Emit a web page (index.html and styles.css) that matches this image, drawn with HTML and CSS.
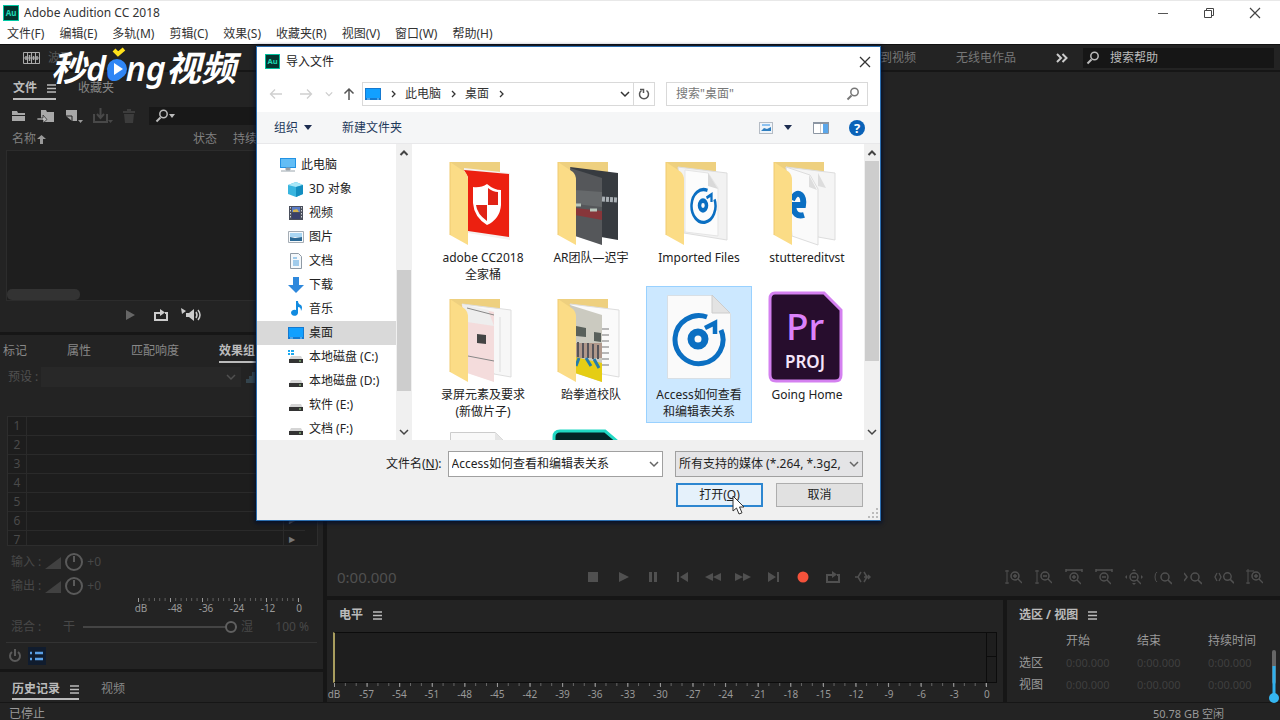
FILE: index.html
```html
<!DOCTYPE html>
<html lang="zh-CN">
<head>
  <meta charset="UTF-8" />
  <title>Adobe Audition CC 2018</title>
  <link rel="stylesheet" href="styles.css">
</head>
<body>
  <!-- Shared symbols -->
  <svg class="defs" width="0" height="0" aria-hidden="true">
    <symbol id="menu" viewBox="0 0 9 9"><path d="M0 1h9M0 4.5h9M0 8h9" stroke="currentColor" stroke-width="1.3"/></symbol>
    <symbol id="chev" viewBox="0 0 10 10"><path d="M1 3l4 4 4-4" fill="none" stroke="currentColor" stroke-width="1.5"/></symbol>
    <symbol id="chev-up" viewBox="0 0 10 10"><path d="M1.500 7L5 3.500 8.500 7" fill="none" stroke="currentColor" stroke-width="2"/></symbol>
    <symbol id="chev-right" viewBox="0 0 10 10"><path d="M4 2l3 3-3 3" fill="none" stroke="currentColor" stroke-width="1.300"/></symbol>
    <symbol id="au" viewBox="0 0 16 16">
      <rect width="16" height="16" fill="#00c8a4"/><rect x="1" y="1" width="14" height="14" fill="#04352f"/>
      <text x="8" y="11" text-anchor="middle" font-size="8" font-weight="700" fill="#20d8b4">Au</text>
    </symbol>
    <symbol id="desk" viewBox="0 0 16 16"><rect x="0" y="2" width="16" height="12" fill="#1579cf"/><rect x="1" y="3" width="14" height="9" fill="#12a0ff"/><path d="M2 13h3M12 13h2" stroke="#8fd0ff"/></symbol>
    <symbol id="drive" viewBox="0 0 16 16"><path d="M3 7h10l2 4H1z" fill="#d5d5d5"/><rect x="1" y="10" width="14" height="4" fill="#333"/><path d="M11 12h2" stroke="#9fe08f"/></symbol>
    <symbol id="lens" viewBox="0 0 14 14"><path d="M5.500 8.500L1.500 12.500" stroke="currentColor" stroke-width="2"/><circle cx="8.500" cy="5" r="3.700" fill="none" stroke="currentColor" stroke-width="1.500"/></symbol>
    <symbol id="loop" viewBox="0 0 16 14"><path d="M4 5H2v7h12V5h-2M3 5h6" fill="none" stroke="currentColor" stroke-width="2"/><path d="M7 1l5 3.500L7 8z" fill="currentColor"/></symbol>
    <symbol id="folder-back" viewBox="0 0 96 92"><path d="M15 8h50v66H15z" fill="#eed07f"/></symbol>
    <symbol id="folder-front" viewBox="0 0 96 92"><path d="M15 8l15 10q3 3 3 8v65L15 81z" fill="#fbdc86"/><path d="M15 8v73" stroke="#f0ca70"/></symbol>
    <symbol id="disc" viewBox="0 0 60 60" preserveAspectRatio="none"><path d="M39 8A24 24 0 1 0 53 21" fill="none" stroke="#0b6fc2" stroke-width="5"/><path d="M37 19l10-5v11" fill="none" stroke="#0b6fc2" stroke-width="4.500"/><circle cx="30" cy="30" r="7" fill="none" stroke="#0b6fc2" stroke-width="7"/></symbol>
    <symbol id="zoom-in" viewBox="0 0 16 16"><circle cx="9" cy="7" r="4" fill="none" stroke="currentColor" stroke-width="1.500"/><path d="M12 10l4 4M7 7h4M9 5v4" stroke="currentColor" stroke-width="1.400"/></symbol>
    <symbol id="zoom-out" viewBox="0 0 16 16"><circle cx="9" cy="7" r="4" fill="none" stroke="currentColor" stroke-width="1.500"/><path d="M12 10l4 4M7 7h4" stroke="currentColor" stroke-width="1.400"/></symbol>
    <symbol id="zoom" viewBox="0 0 16 16"><circle cx="9" cy="7" r="4" fill="none" stroke="currentColor" stroke-width="1.500"/><path d="M12 10l4 4" stroke="currentColor" stroke-width="1.600"/></symbol>
  </svg>

  <header class="titlebar">
    <svg width="16" height="16"><use href="#au"/></svg>
    <span class="app-name">Adobe Audition CC 2018</span>
    <div class="window-buttons">
      <button aria-label="最小化"><svg width="12" height="12"><path d="M1 6.500h10" stroke="#555"/></svg></button>
      <button aria-label="还原"><svg width="12" height="12" fill="none" stroke="#444"><path d="M1.500 3.500h7v7h-7zM3.500 3.500v-2h7v7h-2"/></svg></button>
      <button aria-label="关闭"><svg width="12" height="12"><path d="M1 1l10 10M11 1L1 11" stroke="#444" stroke-width="1.200"/></svg></button>
    </div>
  </header>

  <nav class="menubar">
    <button>文件(F)</button><button>编辑(E)</button><button>多轨(M)</button><button>剪辑(C)</button><button>效果(S)</button><button>收藏夹(R)</button><button>视图(V)</button><button>窗口(W)</button><button>帮助(H)</button>
  </nav>

  <div class="workspace-bar">
    <button class="mode"><svg width="17" height="12" fill="none" stroke="#aaa"><path d="M.5 .5h16v11H.5zM4.500 1v10M8.500 1v10M12.500 1v10M1 6h15" /><path d="M3 4v4M6.500 3v6M10.500 4v4M14 4v4" stroke-width="1.500"/></svg>波形</button>
    <div class="workspaces">
      <a href="#">编辑音频到视频</a>
      <a href="#">无线电作品</a>
      <button class="more" aria-label="更多"><svg width="12" height="10" fill="none" stroke="#ccc" stroke-width="2"><path d="M1 1l4 4-4 4M6.500 1l4 4-4 4"/></svg></button>
    </div>
    <label class="help-search"><svg width="14" height="14"><use href="#lens"/></svg><input type="text" placeholder="搜索帮助" aria-label="搜索帮助"></label>
  </div>

  <main class="workspace">
    <div class="side">
      <!-- Files -->
      <section class="panel files-panel">
        <div class="tabs">
          <button class="tab active">文件<svg width="9" height="9"><use href="#menu"/></svg></button>
          <button class="tab">收藏夹</button>
        </div>
        <div class="file-tools">
          <button aria-label="打开"><svg width="16" height="14"><path d="M1 2h5l1 2h7v8H1z" fill="#a8a8a8"/><path d="M1 6.500h14" stroke="#232323"/></svg></button>
          <button aria-label="导入"><svg width="18" height="14"><path d="M4 1h5l1 2h7v10H6V9H4z" fill="#a8a8a8"/><path d="M0 9h6V6l4 4.500-4 3.500v-3H0z" fill="#bbb" stroke="#232323" stroke-width=".7"/></svg></button>
          <button aria-label="新建"><svg width="18" height="14"><path d="M1 1h11v11H7L1 7z" fill="#a8a8a8"/><path d="M1 7h6v5" stroke="#232323" fill="none"/><path d="M13 11h5l-2.500 3z" fill="#999"/></svg></button>
          <button aria-label="插入"><svg width="20" height="16" fill="none" stroke="#484848" stroke-width="2"><path d="M1 6v8h13V6M7.500 0v9M4 6l3.500 4L11 6"/><path d="M15 12h5l-2.500 3z" fill="#484848" stroke="none"/></svg></button>
          <button aria-label="删除"><svg width="12" height="14"><path d="M0 2h4V0h4v2h4v2H0zM1 5h10l-1 9H2z" fill="#3c3c3c"/></svg></button>
          <label class="find"><svg width="14" height="14"><use href="#lens"/></svg><svg width="6" height="4"><path d="M0 0h6L3 4z" fill="#bbb"/></svg><input type="text" aria-label="查找文件"></label>
        </div>
        <div class="list-head"><span>名称<svg width="9" height="9"><path d="M4.500 0L9 4H6v5H3V4H0z" fill="#999"/></svg></span><span>状态</span><span>持续时间</span></div>
        <div class="list-box"><div class="hthumb"></div></div>
        <div class="preview">
          <button aria-label="播放"><svg width="10" height="12"><path d="M1 1l9 5-9 5z" fill="#666"/></svg></button>
          <button aria-label="循环"><svg width="16" height="14"><use href="#loop"/></svg></button>
          <button aria-label="自动播放"><svg width="22" height="14"><path d="M0 0l5 3-4 3z" fill="#ccc"/><path d="M5 5h3l5-4v12l-5-4H5z" fill="#ccc"/><path d="M15 4q2 3 0 6M17 2q4 5 0 10" fill="none" stroke="#ccc" stroke-width="1.500"/></svg></button>
        </div>
      </section>

      <!-- Effects rack -->
      <section class="panel effects-panel">
        <div class="tabs">
          <button class="tab">标记</button><button class="tab">属性</button><button class="tab">匹配响度</button><button class="tab active">效果组<svg width="9" height="9"><use href="#menu"/></svg></button>
        </div>
        <div class="preset">
          <label for="preset">预设 :</label>
          <span class="preset-box"><select id="preset"><option></option></select><svg width="10" height="10"><use href="#chev"/></svg></span>
          <svg width="12" height="12"><path d="M0 12V8h3V5h3V1h3v11z" fill="#34444d"/></svg>
        </div>
        <ol class="rack">
          <li><b>1</b><i></i></li><li><b>2</b><i></i></li><li><b>3</b><i></i></li><li><b>4</b><i></i></li><li><b>5</b><i></i></li><li><b>6</b><i>▶</i></li><li><b>7</b><i>▶</i></li>
        </ol>
        <div class="gain"><span>输入 :</span><svg width="16" height="14"><path d="M0 14L16 2v12z" fill="#414141"/></svg><svg width="18" height="18" fill="none" stroke="#5a5a5a" stroke-width="2"><circle cx="9" cy="9" r="8"/><path d="M9 3v6"/></svg><span>+0</span></div>
        <div class="gain"><span>输出 :</span><svg width="16" height="14"><path d="M0 14L16 2v12z" fill="#414141"/></svg><svg width="18" height="18" fill="none" stroke="#5a5a5a" stroke-width="2"><circle cx="9" cy="9" r="8"/><path d="M9 3v6"/></svg><span>+0</span></div>
        <div class="meter-scale">
          <div class="ticks"></div>
          <div class="scale"><span>dB</span><span>-48</span><span>-36</span><span>-24</span><span>-12</span><span>0</span></div>
        </div>
        <div class="mix"><label for="mix">混合 :</label><span>干</span><input id="mix" type="range" value="100"><span>湿</span><span class="percent">100 %</span></div>
        <div class="rack-foot">
          <button aria-label="电源"><svg width="14" height="14" fill="none" stroke="#5a5a5a" stroke-width="2"><path d="M4 3a5 5 0 1 0 6 0M7 0v7"/></svg></button>
          <button class="on" aria-label="列表"><svg width="14" height="10"><path d="M0 2h2M0 8h2M5 2h8M5 8h8" stroke="#5aa0e6" stroke-width="2.500"/></svg></button>
        </div>
      </section>

      <section class="panel history-panel">
        <div class="tabs">
          <button class="tab active">历史记录<svg width="9" height="9"><use href="#menu"/></svg></button>
          <button class="tab">视频</button>
        </div>
      </section>
    </div>

    <div class="center">
      <section class="panel editor">
        <div class="transport">
          <span class="time">0:00.000</span>
          <div class="transport-buttons">
            <button aria-label="停止"><svg width="16" height="14"><path d="M3 2h10v10H3z"/></svg></button>
            <button aria-label="播放"><svg width="16" height="14"><path d="M4 2l10 5-10 5z"/></svg></button>
            <button aria-label="暂停"><svg width="16" height="14"><path d="M4 2h3v10H4zM9 2h3v10H9z"/></svg></button>
            <button aria-label="上一个"><svg width="16" height="14"><path d="M2 2h2v10H2zM13 2v10L5 7z"/></svg></button>
            <button aria-label="快退"><svg width="16" height="14"><path d="M8 3v8L0 7zM16 3v8L8 7z"/></svg></button>
            <button aria-label="快进"><svg width="16" height="14"><path d="M0 3v8l8-4zM8 3v8l8-4z"/></svg></button>
            <button aria-label="下一个"><svg width="16" height="14"><path d="M3 2v10l8-5zM12 2h2v10h-2z"/></svg></button>
            <button aria-label="录制"><svg width="16" height="14"><circle cx="8" cy="7" r="5.500" fill="#f4523b"/></svg></button>
            <button aria-label="循环播放"><svg width="16" height="14"><use href="#loop"/></svg></button>
            <button aria-label="跳过所选"><svg width="16" height="14"><path d="M0 7h4M6 2L3 7l3 5M9 2l3 5-3 5M9 7h6M13 5l2 2-2 2" fill="none" stroke="#505050" stroke-width="1.500"/></svg></button>
          </div>
          <div class="zoom-buttons">
            <button aria-label="放大振幅"><svg width="18" height="16"><use href="#zoom-in" x="1" width="16" height="16"/><path d="M2 1v14M0 2h4M0 14h4" stroke="currentColor"/></svg></button>
            <button aria-label="缩小振幅"><svg width="18" height="16"><use href="#zoom-out" x="1" width="16" height="16"/><path d="M2 1v14M0 2h4M0 14h4" stroke="currentColor"/></svg></button>
            <button aria-label="放大时间"><svg width="18" height="16"><use href="#zoom-in" y="1" width="16" height="16"/><path d="M1 1h16M1 0v3M17 0v3" stroke="currentColor" stroke-width="1.500"/></svg></button>
            <button aria-label="缩小时间"><svg width="18" height="16"><use href="#zoom-out" y="1" width="16" height="16"/><path d="M1 1h16M1 0v3M17 0v3" stroke="currentColor" stroke-width="1.500"/></svg></button>
            <button aria-label="全部缩小"><svg width="18" height="16"><use href="#zoom-out" y="1" width="16" height="16"/><path d="M7 2l2-2 2 2zM7 14l2 2 2-2zM2 6L0 8l2 2zM16 6l2 2-2 2z" fill="currentColor"/></svg></button>
            <button aria-label="入点放大"><svg width="18" height="16"><use href="#zoom" x="2" y="1" width="16" height="16"/><path d="M3 3Q1 4 1 8t2 5" fill="none" stroke="currentColor"/></svg></button>
            <button aria-label="出点放大"><svg width="18" height="16"><use href="#zoom" x="2" y="1" width="16" height="16"/><path d="M0 4l3 4-3 4" fill="none" stroke="currentColor" stroke-width="1.500"/></svg></button>
            <button aria-label="缩放至选区"><svg width="20" height="16"><use href="#zoom" x="5" y="1" width="15" height="15"/><path d="M3 4L1 8l2 4M5 4l2 4-2 4" fill="none" stroke="currentColor" stroke-width="1.300"/></svg></button>
            <button aria-label="缩放轨道"><svg width="18" height="16"><use href="#zoom-in" x="1" width="16" height="16"/><path d="M2 0v15M0 2h4M0 14h4M4 2h4" stroke="currentColor"/></svg></button>
          </div>
        </div>
      </section>
      <div class="bottom">
        <section class="panel levels">
          <h2>电平<svg width="9" height="9"><use href="#menu"/></svg></h2>
          <div class="level-box"><div class="peaks"><i></i><i></i></div></div>
          <div class="level-scale">
            <div class="ticks"></div>
            <div class="scale"><span>dB</span><span>-57</span><span>-54</span><span>-51</span><span>-48</span><span>-45</span><span>-42</span><span>-39</span><span>-36</span><span>-33</span><span>-30</span><span>-27</span><span>-24</span><span>-21</span><span>-18</span><span>-15</span><span>-12</span><span>-9</span><span>-6</span><span>-3</span><span>0</span></div>
          </div>
        </section>
        <section class="panel selection">
          <h2>选区 / 视图<svg width="9" height="9"><use href="#menu"/></svg></h2>
          <table>
            <tr><th></th><th>开始</th><th>结束</th><th>持续时间</th></tr>
            <tr><th>选区</th><td>0:00.000</td><td>0:00.000</td><td>0:00.000</td></tr>
            <tr><th>视图</th><td>0:00.000</td><td>0:00.000</td><td>0:00.000</td></tr>
          </table>
        </section>
      </div>
    </div>
  </main>

  <footer class="statusbar"><span>已停止</span><span class="disk">50.78 GB 空闲</span></footer>

  <svg class="gauge" width="12" height="56"><path d="M6 4v30" stroke="#666" stroke-width="4" stroke-linecap="round"/><path d="M6 18v32" stroke="#2fb0ec" stroke-width="3"/><circle cx="6" cy="50" r="5" fill="#35b6f0"/></svg>

  <div class="brand">
    <span>秒</span><span class="latin">d</span><span class="latin o">o<svg width="22" height="34" viewBox="0 0 22 34"><path d="M8 3l4 4 6-5" fill="none" stroke="#ffe11a" stroke-width="4"/><circle cx="11" cy="22" r="10" fill="#2f86f5"/><path d="M8 16l9 6-9 6z" fill="#fff"/></svg></span><span class="latin">ng</span><span>视频</span>
  </div>

  <!-- Import dialog -->
  <div class="dialog" role="dialog" aria-label="导入文件">
    <div class="dialog-title">
      <svg width="15" height="15" viewBox="0 0 16 16"><use href="#au"/></svg><span>导入文件</span>
      <button aria-label="关闭"><svg width="12" height="12"><path d="M1 1l10 10M11 1L1 11" stroke="#333" stroke-width="1.300"/></svg></button>
    </div>

    <div class="dialog-nav">
      <button aria-label="后退"><svg width="14" height="12" fill="none" stroke="#cfcfcf" stroke-width="1.300"><path d="M13 6H2M6 1.500L1.500 6 6 10.500"/></svg></button>
      <button aria-label="前进"><svg width="14" height="12" fill="none" stroke="#cfcfcf" stroke-width="1.300"><path d="M1 6h11M8 1.500l4.500 4.500L8 10.500"/></svg></button>
      <button class="recent" aria-label="最近位置"><svg width="8" height="8"><use href="#chev"/></svg></button>
      <button class="up" aria-label="向上"><svg width="12" height="14" fill="none" stroke="#555" stroke-width="1.500"><path d="M6 13V2M1.500 6.500L6 2l4.500 4.500"/></svg></button>
      <div class="address">
        <svg width="16" height="16"><use href="#desk"/></svg>
        <svg width="10" height="10"><use href="#chev-right"/></svg>
        <span>此电脑</span>
        <svg width="10" height="10"><use href="#chev-right"/></svg>
        <span>桌面</span>
        <svg width="10" height="10"><use href="#chev-right"/></svg>
        <svg class="drop" width="10" height="10"><use href="#chev"/></svg>
        <button aria-label="刷新"><svg width="12" height="12" fill="none" stroke="#555" stroke-width="1.500"><path d="M8.500 2.500a4.500 4.500 0 1 1-5 0"/><path d="M2 1.500h3.500V5"/></svg></button>
      </div>
      <label class="search"><input type="text" placeholder="搜索&quot;桌面&quot;" aria-label="搜索桌面"><svg width="14" height="14"><use href="#lens"/></svg></label>
    </div>

    <div class="dialog-tools">
      <button>组织<svg width="8" height="5"><path d="M0 0h8L4 5z" fill="#1c2c50"/></svg></button>
      <button>新建文件夹</button>
      <div class="views">
        <button aria-label="视图"><svg width="14" height="12"><rect x=".5" y=".5" width="13" height="11" fill="#eef4fa" stroke="#b5bcc5"/><path d="M2 9l3-3 3 1 4-2v4z" fill="#2f7fc0"/><path d="M3 3h8" stroke="#6bb1ec" stroke-width="1.500"/></svg></button>
        <button aria-label="更多选项"><svg width="8" height="5"><path d="M0 0h8L4 5z" fill="#1c2c50"/></svg></button>
        <button aria-label="预览窗格"><svg width="16" height="12"><path d="M.5 .5h15v11H.5z" fill="#fff" stroke="#8c96a3"/><path d="M0 1h16" stroke="#8c96a3" stroke-width="2"/><path d="M10 2h5v9h-5z" fill="#5ba7ea"/><path d="M7.500 2v9" stroke="#ccc"/></svg></button>
        <button aria-label="帮助"><svg width="16" height="16"><circle cx="8" cy="8" r="8" fill="#0a62b8"/><text x="8" y="12.500" text-anchor="middle" font-size="13" font-weight="700" fill="#fff">?</text></svg></button>
      </div>
    </div>

    <div class="dialog-body">
      <ul class="tree">
        <li class="root"><svg width="16" height="16"><path d="M0 1h16v10H0z" fill="#2292e3"/><path d="M1 2h14v8H1z" fill="#62bdf5"/><path d="M6 11h4v2H6zM1 14h14" fill="#999" stroke="#9aa5ad"/></svg>此电脑</li>
        <li><svg width="16" height="16"><path d="M0 4l8-3 7 3v9l-7 3-8-3z" fill="#38b5df"/><path d="M0 4l8 2 7-2-7-3z" fill="#a8e7f7"/><path d="M8 6l7-2v9l-7 3z" fill="#138ec0"/></svg>3D 对象</li>
        <li><svg width="16" height="16"><path d="M1 1h14v14H1z" fill="#4a4f5c"/><path d="M4 2h8v5H4z" fill="#5a7cc8"/><path d="M4 8h8v6H4z" fill="#38406a"/><path d="M5 5l4-1 2 3H5z" fill="#d2b24f"/><path d="M2.500 2v12M13.500 2v12" stroke="#cdd0d6" stroke-dasharray="1.500"/></svg>视频</li>
        <li><svg width="16" height="16"><path d="M.5 2.500h15v11H.5z" fill="#f7fafc" stroke="#a5adb5"/><path d="M2 4h12v4H2z" fill="#a9d6f3"/><path d="M2 12V8l5 1 7-1v4z" fill="#2b6995"/></svg>图片</li>
        <li><svg width="16" height="16"><path d="M2.500 .5h8l3 3v12h-11z" fill="#f4f8fb" stroke="#8f9aa5"/><path d="M5 5h4M5 8h6M5 10h6M5 12h6" stroke="#4d9fdc"/></svg>文档</li>
        <li><svg width="16" height="16"><path d="M5 0h6v8h5l-8 8-8-8h5z" fill="#2e88dc"/></svg>下载</li>
        <li><svg width="16" height="16"><path d="M8 0h2q0 3 3 4 2 2 0 6 0-4-3-4v6a3.500 3 0 1 1-2-3z" fill="#128be0"/></svg>音乐</li>
        <li class="selected"><svg width="16" height="16"><use href="#desk"/></svg>桌面</li>
        <li><svg width="16" height="16"><use href="#drive"/><path d="M0 1h2v2H0zM3 1h3v2H3zM0 4h2v2H0zM3 4h3v2H3z" fill="#1eaaf0"/></svg>本地磁盘 (C:)</li>
        <li><svg width="16" height="16"><use href="#drive"/></svg>本地磁盘 (D:)</li>
        <li><svg width="16" height="16"><use href="#drive"/></svg>软件 (E:)</li>
        <li><svg width="16" height="16"><use href="#drive"/></svg>文档 (F:)</li>
      </ul>
      <div class="scroll tree-scroll"><svg width="10" height="10"><use href="#chev-up"/></svg><div class="thumb"></div><svg width="10" height="10"><use href="#chev"/></svg></div>

      <div class="files">
        <div class="file">
          <svg width="96" height="92"><use href="#folder-back"/><path d="M29 14l46 5v67l-42-7z" fill="#f5f0ee"/><path d="M29 16l45 4v63l-41-6V23z" fill="#ec2010"/><path d="M52 30q7 6 14 6v15q-1 14-14 20-13-8-14-22V33q8 1 14-3z" fill="#fff"/><path d="M52 35v16H41V37q7 0 11-2z" fill="#fff"/><path d="M53 34q5 4 10 4v13H53zM41 51h11v16q-10-7-11-16z" fill="#e02316"/><use href="#folder-front"/></svg>
          <span>adobe CC2018全家桶</span>
        </div>
        <div class="file">
          <svg width="96" height="92"><use href="#folder-back"/><path d="M27 13l48 6v67l-17-3z" fill="#373b40"/><path d="M27 14l32 10v67l-27-9z" fill="#55575a"/><path d="M32 36l27 2v15l-27-3z" fill="#66696b"/><path d="M32 54l27 3v9l-27-5z" fill="#87363a"/><path d="M33 51h5M47 56h7" stroke="#b9c8bd" stroke-width="3"/><path d="M59 45l15 1" stroke="#aab0b5" stroke-width="5" stroke-dasharray="3 1"/><use href="#folder-front"/></svg>
          <span>AR团队—迟宇</span>
        </div>
        <div class="file">
          <svg width="96" height="92"><use href="#folder-back"/><path d="M27 13l49 6v67l-43-7z" fill="#f2f2f2" stroke="#ddd"/><path d="M34 16l23 3 10 15v48l-33-4z" fill="#fcfcfc" stroke="#e5e5e5"/><path d="M57 19v13l10 3z" fill="#d9d9d9"/><use href="#disc" x="37" y="31" width="30" height="41"/><use href="#folder-front"/></svg>
          <span>Imported Files</span>
        </div>
        <div class="file">
          <svg width="96" height="92"><use href="#folder-back"/><path d="M27 13l49 6v67l-17-3z" fill="#f5f5f5" stroke="#ddd"/><path d="M27 13l24 8 8 14v56l-26-9z" fill="#fafafa" stroke="#ddd"/><path d="M50 21v12l8 3zM59 19v13l8 2z" fill="#ddd"/><path d="M33 46q4-9 9-5 3 3 2 10H34q1 13 11 10" fill="none" stroke="#0b6fc2" stroke-width="6"/><use href="#folder-front"/></svg>
          <span>stuttereditvst</span>
        </div>
        <div class="file">
          <svg width="96" height="92"><use href="#folder-back"/><path d="M27 13l49 6v67l-17-3z" fill="#f7f7f7" stroke="#ddd"/><path d="M27 14l32 7v70l-27-9z" fill="#f4dcdc"/><path d="M27 13l26 6 6 16-27-4z" fill="#eee"/><path d="M33 65l26 5M32 17l27 7" stroke="#888"/><path d="M42 43l9 1v9l-9-1z" fill="#444"/><path d="M65 26v55" stroke="#ddd"/><use href="#folder-front"/></svg>
          <span>录屏元素及要求(新做片子)</span>
        </div>
        <div class="file">
          <svg width="96" height="92"><use href="#folder-back"/><path d="M27 13l49 6v67l-17-3z" fill="#fafafa" stroke="#ddd"/><path d="M27 14l32 10v67l-27-9z" fill="#cbcac0"/><path d="M33 35l10 2v9l-10-1zM51 41l7 1v9l-7-1z" fill="#59605b"/><path d="M33 52h26v15H33z" fill="#b0988b"/><path d="M35 51v15M40 52v15M45 52v15M50 53v15M55 54v14" stroke="#56545a" stroke-width="2"/><path d="M32 66l27 6v19l-27-9z" fill="#e5cd14"/><path d="M36 67l-3 8M43 67l5 8M51 68l5 9" stroke="#247cac" stroke-width="3"/><path d="M59 38h7M59 44h7M59 50h7M59 56h7M59 62h7M59 68h7M59 74h7" stroke="#777"/><use href="#folder-front"/></svg>
          <span>跆拳道校队</span>
        </div>
        <div class="file selected">
          <svg width="96" height="92"><path d="M16.500 4.500h45l18 18v65h-63z" fill="#fafafa" stroke="#d8dfe5"/><path d="M61 4v18h18z" fill="#e3e3e3" stroke="#ccc"/><use href="#disc" x="17" y="18" width="60" height="60"/></svg>
          <span>Access如何查看和编辑表关系</span>
        </div>
        <div class="file">
          <svg width="96" height="92"><path d="M16 2h49l17 17v65q0 6-6 6H17q-6 0-6-6V8q0-6 5-6z" fill="#270d2d" stroke="#d480f0" stroke-width="3"/><text x="46" y="49" text-anchor="middle" font-size="37" font-weight="500" fill="#dc82fb">Pr</text><text x="46" y="77" text-anchor="middle" font-size="17" font-weight="600" fill="#f5e5fa">PROJ</text></svg>
          <span>Going Home</span>
        </div>
        <div class="file"><svg width="96" height="92"><path d="M15.500 4.500h45l18 18v65h-63z" fill="#f8f8f8" stroke="#ccc"/><path d="M60 4v18h18z" fill="#e5e5e5"/></svg></div>
        <div class="file"><svg width="96" height="92"><path d="M17 3h45l20 17v80H11V9q0-6 6-6z" fill="#032527" stroke="#20d8c4" stroke-width="3"/></svg></div>
      </div>
      <div class="scroll file-scroll"><svg width="10" height="10"><use href="#chev-up"/></svg><div class="thumb"></div><svg width="10" height="10"><use href="#chev"/></svg></div>
    </div>

    <div class="dialog-footer">
      <div class="field-row">
        <label for="filename">文件名(<u>N</u>):</label>
        <span class="field name-field"><input id="filename" type="text" value="Access如何查看和编辑表关系"><svg width="10" height="10"><use href="#chev"/></svg></span>
        <span class="field type-field"><select aria-label="文件类型"><option>所有支持的媒体 (*.264, *.3g2,</option></select><svg width="10" height="10"><use href="#chev"/></svg></span>
      </div>
      <div class="button-row">
        <button class="default">打开(<u>O</u>)</button>
        <button>取消</button>
      </div>
      <svg class="grip" width="10" height="10"><path d="M8 0h2v2H8zM4 4h2v2H4zM8 4h2v2H8zM0 8h2v2H0zM4 8h2v2H4zM8 8h2v2H8z" fill="#bbb"/></svg>
    </div>
  </div>

  <svg class="cursor" width="14" height="20"><path d="M1 1v15l3.500-3 2.500 6 3-1.200L7.500 12H12z" fill="#fff" stroke="#333"/></svg>
</body>
</html>
```
FILE: styles.css
```css
/* --- Base --- */
* {
  box-sizing: border-box;
}
body {
  margin: 0;
  height: 100vh;
  display: flex;
  flex-direction: column;
  overflow: hidden;
  position: relative;
  background: #161616;
  color: #999;
  font: 12px/16px "Noto Sans", "Noto Sans CJK SC", sans-serif;
}
button, input, select {
  margin: 0;
  padding: 0;
  border: 0;
  background: none;
  color: inherit;
  font: inherit;
  outline: none;
  min-width: 0;
}
input {
  width: 0;
}
select {
  appearance: none;
}
button {
  display: flex;
  flex: none;
  align-items: center;
  justify-content: center;
  white-space: nowrap;
}
svg {
  flex: none;
  display: block;
}
.defs {
  position: absolute;
}
a {
  color: inherit;
  text-decoration: none;
}

/* --- Title bar and menu --- */
.titlebar {
  display: flex;
  align-items: center;
  height: 24px;
  padding-left: 3px;
  gap: 5px;
  background: #fff;
  color: #333;
  border-top: 1px solid #e8e8e8;
}
.window-buttons {
  display: flex;
  margin-left: auto;
  padding-right: 2px;
}
.window-buttons button {
  width: 46px;
}
.menubar {
  display: flex;
  height: 20px;
  padding: 0 7px;
  gap: 15px;
  background: #fff;
  color: #333;
}

/* --- Workspace bar --- */
.workspace-bar {
  display: flex;
  align-items: center;
  height: 26px;
  flex: none;
  padding-left: 16px;
  background: #232323;
  border-top: 1px solid #111;
}
.mode {
  gap: 8px;
  padding: 0 7px;
  color: #555;
}
.workspaces {
  display: flex;
  align-items: center;
  margin-left: auto;
  gap: 40px;
  color: #777;
}
.more {
  padding-right: 15px;
}
.help-search {
  display: flex;
  align-items: center;
  gap: 10px;
  width: 191px;
  height: 20px;
  margin-right: 6px;
  padding-left: 3px;
  background: #161616;
  color: #bbb;
}
.help-search input {
  flex: 1;
}
input::placeholder {
  color: inherit;
  opacity: 1;
}

/* --- Panels --- */
.workspace {
  flex: 1;
  min-height: 0;
  display: flex;
  gap: 4px;
  padding-top: 2px;
}
.side {
  width: 323px;
  display: flex;
  flex-direction: column;
  gap: 3px;
}
.panel {
  background: #232323;
}
.files-panel {
  height: 260px;
}
.effects-panel {
  flex: 1;
  min-height: 0;
}
.tabs {
  display: flex;
  height: 28px;
  align-items: flex-end;
}
.tab {
  height: 22px;
  gap: 10px;
  color: #888;
  border-bottom: 2px solid transparent;
}
.tab.active {
  color: #bbb;
  font-weight: 700;
  border-color: #bbb;
}
.files-panel .tabs {
  padding-left: 13px;
  gap: 22px;
}
.history-panel .tabs {
  padding-left: 12px;
  gap: 22px;
}
.history-panel .tab {
  height: 20px;
}
.history-panel {
  height: 30px;
}
.effects-panel .tabs {
  padding-left: 3px;
  gap: 40px;
}

/* --- Files panel --- */
.file-tools {
  display: flex;
  align-items: center;
  height: 31px;
  gap: 10px;
  padding-left: 11px;
}
.find {
  display: flex;
  align-items: center;
  flex: 1;
  height: 18px;
  margin-left: 4px;
  padding-left: 6px;
  background: #181818;
  color: #bbb;
}
.find input {
  flex: 1;
}
.list-head {
  display: grid;
  grid-template-columns: 181px 40px 1fr;
  padding-left: 12px;
  color: #808080;
  white-space: nowrap;
}
.list-head span {
  display: flex;
  align-items: center;
  gap: 1px;
}
.list-box {
  display: flex;
  align-items: flex-end;
  height: 151px;
  margin: 3px 5px 0 6px;
  background: #1e1e1e;
  border: 1px solid #2c2c2c;
}
.hthumb {
  width: 73px;
  height: 11px;
  border-radius: 5px;
  background: #333;
}
.preview {
  display: flex;
  align-items: center;
  height: 28px;
  gap: 18px;
  padding-left: 125px;
  color: #ccc;
}
.preview button:last-child {
  margin-left: -6px;
}

/* --- Effects rack --- */
.preset {
  display: flex;
  align-items: center;
  height: 28px;
  gap: 5px;
  padding-left: 8px;
  color: #505050;
}
.preset label {
  width: 28px;
  white-space: nowrap;
}
.preset-box {
  display: flex;
  align-items: center;
  width: 200px;
  height: 20px;
  padding-right: 5px;
  background: #282828;
}
.preset-box select {
  flex: 1;
}
.rack {
  height: 130px;
  margin: 25px 5px 0 7px;
  padding: 0 12px 0 0;
  overflow: hidden;
  list-style: none;
  border: 1px solid #2d2d2d;
  background: #1d1d1d;
}
.rack li {
  display: flex;
  height: 19px;
  line-height: 18px;
  border-bottom: 1px solid #2a2a2a;
}
.rack b {
  width: 19px;
  text-align: center;
  font-weight: 400;
  color: #4a4a4a;
  border-right: 1px solid #2a2a2a;
}
.rack i {
  width: 22px;
  margin-left: auto;
  padding-left: 5px;
  font: 8px/18px "DejaVu Sans", sans-serif;
  color: #777;
  border-left: 1px solid #2a2a2a;
}
.gain {
  display: flex;
  align-items: center;
  height: 24px;
  gap: 4px;
  padding-left: 11px;
  color: #484848;
}
.rack + .gain {
  margin-top: 4px;
}
.meter-scale {
  padding: 0 24px 0 138px;
}
.ticks {
  border-right: 1px solid #999;
  background-repeat: repeat-x;
}
.meter-scale .ticks {
  height: 4px;
  background-image: linear-gradient(90deg, #999 1px, transparent 1px), linear-gradient(90deg, #666 1px, transparent 1px);
  background-size: 20% 5px, calc(100% / 30) 3px;
}
.scale {
  display: flex;
  justify-content: space-between;
  font-size: 10px;
  line-height: 14px;
  color: #999;
}
.meter-scale .scale {
  line-height: 12px;
}
.scale span {
  display: flex;
  justify-content: center;
  width: 0;
}
.scale span:first-child {
  width: 6px;
}
.mix {
  display: flex;
  align-items: center;
  height: 26px;
  padding: 0 14px 0 11px;
  color: #484848;
}
.mix label {
  width: 52px;
}
.mix input {
  appearance: none;
  width: 154px;
  height: 12px;
  margin: 0 4px 0 8px;
  background: linear-gradient(#444, #444) center / 100% 2px no-repeat;
}
.mix input::-webkit-slider-thumb {
  appearance: none;
  width: 12px;
  height: 12px;
  border: 2px solid #606060;
  border-radius: 50%;
  background: #232323;
}
.percent {
  margin-left: auto;
}
.rack-foot {
  display: flex;
  gap: 4px;
  margin: 2px 6px 0;
  padding-top: 4px;
  border-top: 1px solid #333;
}
.rack-foot button {
  width: 18px;
  height: 18px;
}
.rack-foot .on {
  background: #101c2e;
}

/* --- Editor and transport --- */
.center {
  flex: 1;
  min-width: 0;
  display: flex;
  flex-direction: column;
  gap: 4px;
}
.editor {
  flex: 1;
  display: flex;
  flex-direction: column;
  justify-content: flex-end;
}
.transport {
  display: grid;
  grid-template-columns: 248px 1fr 264px;
  align-items: center;
  height: 38px;
  padding: 0 11px 0 10px;
  color: #505050;
}
.time {
  font-size: 15px;
}
.transport-buttons {
  display: flex;
  gap: 14px;
}
.transport-buttons svg {
  fill: #505050;
}
.zoom-buttons {
  display: flex;
  justify-content: space-between;
  padding-right: 5px;
}

/* --- Levels --- */
.bottom {
  display: flex;
  gap: 4px;
  height: 102px;
}
.levels {
  flex: 1;
  min-width: 0;
}
h2 {
  display: flex;
  align-items: center;
  gap: 10px;
  height: 30px;
  margin: 0;
  padding-left: 12px;
  color: #bbb;
  font-size: 12px;
}
.level-box {
  display: flex;
  justify-content: flex-end;
  height: 51px;
  margin: 2px 6px 0;
  background: #1e1e1e;
  border: 1px solid #0c0c0c;
  border-left: 2px solid #a89d5e;
}
.peaks {
  width: 10px;
  border-left: 1px solid #0c0c0c;
}
.peaks i {
  display: block;
  height: 24px;
  border-bottom: 1px solid #0c0c0c;
}
.peaks i:last-child {
  border: 0;
}
.level-scale {
  padding: 0 16px 0 7px;
}
.level-scale .ticks {
  height: 4px;
  background-image: linear-gradient(90deg, #999 1px, transparent 1px), linear-gradient(90deg, #666 1px, transparent 1px);
  background-size: 5% 5px, calc(100% / 60) 3px;
}
.level-scale span:first-child {
  width: 0;
}

/* --- Selection / view --- */
.selection {
  width: 273px;
}
table {
  border-collapse: collapse;
  margin-left: 12px;
  color: #3f3f3f;
}
th, td {
  padding: 0;
  height: 22px;
  width: 71px;
  text-align: left;
  font-size: 11px;
  font-weight: 400;
}
th {
  color: #999;
  font-size: 12px;
}
th:first-child {
  width: 47px;
}
.statusbar {
  display: flex;
  justify-content: space-between;
  height: 17px;
  flex: none;
  margin-top: 1px;
  padding: 3px 56px 0 9px;
  background: #232323;
}
.disk {
  font-size: 11px;
}

/* --- Overlays --- */
.gauge {
  position: absolute;
  right: 0;
  top: 648px;
}
.brand {
  position: absolute;
  left: 51px;
  top: 46px;
  display: flex;
  align-items: baseline;
  color: #fff;
  font-size: 35px;
  font-style: italic;
  font-weight: 700;
  line-height: 44px;
}
.brand .latin {
  font-size: 34px;
  font-weight: 600;
}
.brand .o {
  position: relative;
  color: #2f86f5;
}
.brand .o svg {
  position: absolute;
  left: 0;
  bottom: 9px;
}
.cursor {
  position: absolute;
  left: 732px;
  top: 495px;
}

/* --- Import dialog --- */
.dialog {
  position: absolute;
  left: 256px;
  top: 46px;
  width: 625px;
  display: flex;
  flex-direction: column;
  background: #fff;
  color: #222;
  border: 1px solid #2c6fb0;
  box-shadow: 0 1px 4px 1px #04102c;
}
.dialog-title {
  display: flex;
  align-items: center;
  height: 29px;
  gap: 6px;
  padding: 0 9px 0 8px;
}
.dialog-title button {
  margin-left: auto;
}
.dialog-nav {
  display: flex;
  align-items: center;
  height: 36px;
  padding: 0 12px 0 4px;
}
.dialog-nav > button {
  width: 30px;
}
.dialog-nav > .recent {
  width: 16px;
  color: #ccc;
}
.dialog-nav > .up {
  width: 24px;
}
.address {
  display: flex;
  align-items: center;
  flex: none;
  gap: 7px;
  width: 293px;
  height: 24px;
  margin-left: 1px;
  padding-left: 2px;
  border: 1px solid #d9d9d9;
  color: #333;
}
.address .drop {
  margin-left: auto;
}
.address button {
  width: 21px;
  height: 100%;
  margin-left: -4px;
  border-left: 1px solid #d9d9d9;
}
.search {
  display: flex;
  align-items: center;
  flex: 1;
  height: 24px;
  margin-left: 11px;
  padding: 0 7px 0 9px;
  border: 1px solid #d9d9d9;
  color: #777;
}
.search input {
  flex: 1;
}
.dialog-tools {
  display: flex;
  align-items: center;
  height: 32px;
  gap: 30px;
  padding: 0 15px 0 17px;
  background: #f5f6f7;
  border-bottom: 1px solid #e8e8ea;
  color: #1e395b;
}
.dialog-tools button {
  gap: 6px;
}
.views {
  display: flex;
  align-items: center;
  margin-left: auto;
}
.views button + button {
  margin-left: 11px;
}
.views button:nth-child(3) {
  margin-left: 21px;
}
.views button:nth-child(4) {
  margin-left: 20px;
}
.dialog-body {
  display: flex;
  height: 296px;
  overflow: hidden;
}
.tree {
  width: 139px;
  margin: 0;
  padding: 9px 0 0;
  list-style: none;
}
.tree li {
  display: flex;
  align-items: center;
  height: 24px;
  gap: 5px;
  padding-left: 31px;
  white-space: nowrap;
}
.tree .root {
  padding-left: 23px;
}
.tree .selected {
  background: #d9d9d9;
}
.scroll {
  display: flex;
  flex-direction: column;
  align-items: center;
  width: 16px;
  padding: 4px 0 3px;
  background: #f0f0f0;
  color: #444;
}
.thumb {
  width: 14px;
  background: #cdcdcd;
}
.tree-scroll .thumb {
  height: 121px;
  margin: auto 0 36px;
}
.file-scroll .thumb {
  height: 200px;
  margin: 3px 0 auto;
}
.files {
  flex: 1;
  display: grid;
  grid-template-columns: repeat(auto-fill, 104px);
  grid-auto-rows: 135px;
  gap: 2px 4px;
  padding: 6px 0 0 19px;
}
.file {
  padding-top: 4px;
  text-align: center;
  line-height: 17px;
}
.file svg {
  margin: 0 auto 3px;
}
.file span {
  display: block;
  width: 90px;
  margin: 0 auto;
}
.file.selected {
  background: #cce8ff;
  outline: 1px solid #99d1ff;
}

/* --- Dialog footer --- */
.dialog-footer {
  position: relative;
  height: 80px;
  padding: 11px 17px 0 129px;
  background: #f0f0f0;
}
.field-row {
  display: flex;
  align-items: center;
  white-space: nowrap;
}
.field {
  display: flex;
  align-items: center;
  height: 26px;
  padding: 0 3px;
  border: 1px solid #a0a0a0;
  color: #222;
}
.field svg {
  color: #666;
}
.field input, .field select {
  flex: 1;
}
.name-field {
  flex: 1;
  min-width: 0;
  margin: 0 12px 0 6px;
  background: #fff;
}
.type-field {
  width: 188px;
  background: #e4e4e6;
}
.button-row {
  display: flex;
  justify-content: flex-end;
  gap: 13px;
  margin-top: 6px;
}
.button-row button {
  width: 87px;
  height: 24px;
  border: 1px solid #adadad;
  background: #e1e1e1;
}
.button-row .default {
  border: 2px solid #2d86d0;
  background: #e5f1fb;
}
.grip {
  position: absolute;
  right: 2px;
  bottom: 2px;
}
```
